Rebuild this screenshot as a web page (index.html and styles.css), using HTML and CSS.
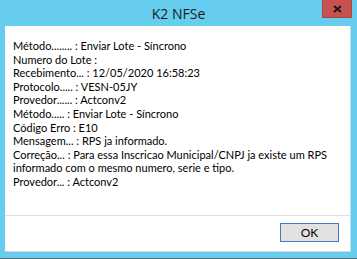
FILE: index.html
```html
<!DOCTYPE html>
<html lang="pt">
<head>
    <meta charset="UTF-8">
    <title>K2 NFSe</title>
    <link rel="stylesheet" href="styles.css">
</head>
<body>
    <div class="window">
        <div class="titlebar">
            <span class="title">K2 NFSe</span>
            <button class="close" type="button">
                <svg width="9" height="8" viewBox="0 0 9 8">
                    <path d="M1 1 L8 7 M8 1 L1 7" stroke="#1a1a1a" stroke-width="2"/>
                </svg>
            </button>
        </div>

        <div class="client">
            <div class="message">
                <div>Método........ : Enviar Lote - Síncrono</div>
                <div>Numero do Lote :</div>
                <div>Recebimento... : 12/05/2020 16:58:23</div>
                <div>Protocolo..... : VESN-05JY</div>
                <div>Provedor...... : Actconv2</div>
                <div>Método..... : Enviar Lote - Síncrono</div>
                <div>Código Erro : E10</div>
                <div>Mensagem... : RPS ja informado.</div>
                <div class="nowrap">Correção... : Para essa Inscricao Municipal/CNPJ ja existe um RPS<br>informado com o mesmo numero, serie e tipo.</div>
                <div>Provedor... : Actconv2</div>
            </div>
            <div class="buttons">
                <button class="ok" type="button">OK</button>
            </div>
        </div>
    </div>
</body>
</html>
```

FILE: styles.css
```css
body {
    margin: 0;
    padding: 0;
    background-color: #ffffff;
    font-family: 'Lato', 'Open Sans', sans-serif;
}

.window {
    position: relative;
    width: 357px;
    height: 258px;
    background-color: #66cdee;
    border-bottom: 1px solid #5f6f75;
    display: flex;
    flex-direction: column;
}

.titlebar {
    height: 26px;
    display: flex;
    align-items: center;
    justify-content: center;
}

.title {
    font-family: 'Open Sans', sans-serif;
    font-size: 14px;
    color: #1b1b1b;
    padding-top: 1px;
}

.close {
    position: absolute;
    top: 0;
    right: 5px;
    width: 30px;
    height: 18px;
    padding: 0;
    border: 1px solid #a34747;
    border-top: none;
    background-color: #c75050;
    display: flex;
    align-items: center;
    justify-content: center;
}

.client {
    margin: 0 6px 0 5px;
    height: 225px;
    background-color: #ffffff;
    border-right: 1px solid #b9e4f2;
    border-bottom: 1px solid #d4d4d4;
    display: flex;
    flex-direction: column;
}

.message {
    height: 176px;
    padding: 13px 8px 0 8px;
    font-size: 11px;
    line-height: 13.6px;
    color: #000000;
    border-bottom: 1px solid #dfdfdf;
}

.nowrap {
    white-space: nowrap;
}

.buttons {
    flex: 1;
    display: flex;
    justify-content: flex-end;
    align-items: flex-start;
    padding: 7px 11px 0 0;
}

.ok {
    width: 59px;
    height: 19px;
    padding: 0;
    font-family: 'Lato', 'Open Sans', sans-serif;
    font-size: 12px;
    color: #000000;
    background-color: #e1e1e1;
    border: 1px solid #3d7bc4;
}
```
